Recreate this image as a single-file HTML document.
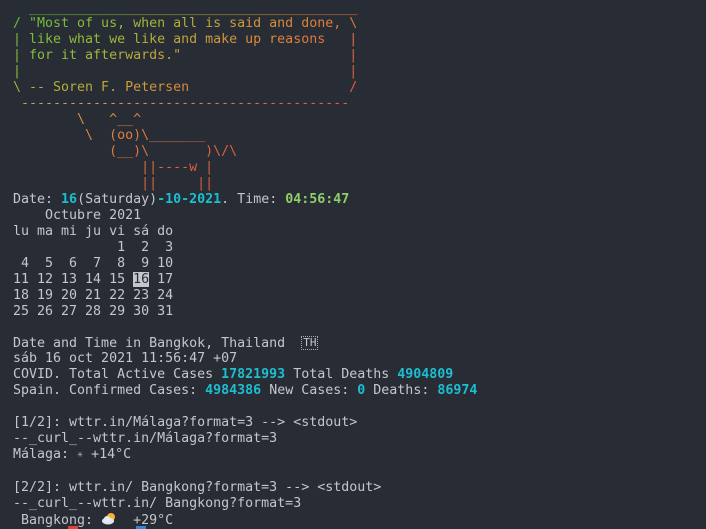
<!DOCTYPE html>
<html><head><meta charset="utf-8"><style>
html,body{margin:0;padding:0;background:#282c34;width:706px;height:529px;overflow:hidden}
pre{position:absolute;left:13px;top:0.5px;margin:0;font-family:"DejaVu Sans Mono","Liberation Mono",monospace;font-size:13.3px;line-height:15.95px;color:#c3c7cd;white-space:pre}
.cow{display:block;width:360px;background:linear-gradient(150deg,#66c43a 20px,#a2bb3a 85px,#c9a23a 125px,#e0843c 165px,#e1633f 225px,#df4a4a 346px);-webkit-background-clip:text;background-clip:text;color:transparent}
.c{color:#1cbfd2;font-weight:bold}
.g{color:#8fd06a;font-weight:bold}
.hl{background:#c3c7cd;color:#282c34}
.th{display:inline-block;border:1px dotted #aaa;font-size:11px;line-height:12px;padding:0 1px;vertical-align:middle}
</style></head><body>
<pre><span class="cow">  _________________________________________
/ "Most of us, when all is said and done, \
| like what we like and make up reasons   |
| for it afterwards."                     |
|                                         |
\ -- Soren F. Petersen                    /
 -----------------------------------------
        \   ^__^
         \  (oo)\_______
            (__)\       )\/\
                ||----w |
                ||     ||</span>Date: <span class="c">16</span>(Saturday)<span class="c">-10-2021</span>. Time: <span class="g">04:56:47</span>
    Octubre 2021
lu ma mi ju vi sá do
             1  2  3
 4  5  6  7  8  9 10
11 12 13 14 15 <span class="hl">16</span> 17
18 19 20 21 22 23 24
25 26 27 28 29 30 31

Date and Time in Bangkok, Thailand  <span class="th">TH</span>
sáb 16 oct 2021 11:56:47 +07
COVID. Total Active Cases <span class="c">17821993</span> Total Deaths <span class="c">4904809</span>
Spain. Confirmed Cases: <span class="c">4984386</span> New Cases: <span class="c">0</span> Deaths: <span class="c">86974</span>

[1/2]: wttr.in/Málaga?format=3 --> &lt;stdout&gt;
--_curl_--wttr.in/Málaga?format=3
Málaga: <span style="font-size:10px;color:#aaa">☀</span> +14°C

[2/2]: wttr.in/ Bangkong?format=3 --> &lt;stdout&gt;
--_curl_--wttr.in/ Bangkong?format=3
 Bangkong: <svg width="16" height="13" viewBox="0 0 16 13" style="vertical-align:-1px"><circle cx="10" cy="5" r="4" fill="#f2b632"/><ellipse cx="7" cy="9" rx="6" ry="3.5" fill="#dfe6ef"/><circle cx="6" cy="7" r="3" fill="#e9eef4"/></svg>  +29°C
</pre>
<div style="position:absolute;left:68px;top:526px;width:10px;height:3px;background:#d9433f"></div>
<div style="position:absolute;left:136px;top:526px;width:10px;height:3px;background:#3b7fd6"></div>
</body></html>
